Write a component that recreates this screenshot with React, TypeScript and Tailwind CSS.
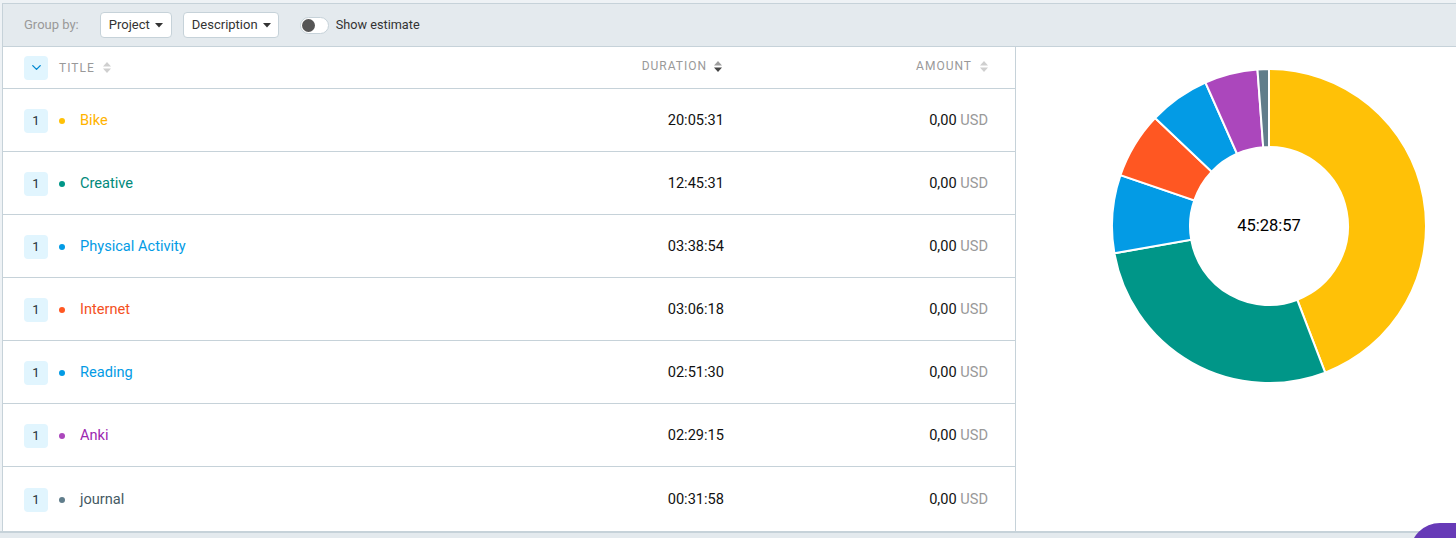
import { ChevronDown } from "lucide-react";

type Row = { name: string; color: string; label: string; duration: string; secs: number };

const rows: Row[] = [
  { name: "Bike", color: "#ffc107", label: "#ffb300", duration: "20:05:31", secs: 72331 },
  { name: "Creative", color: "#009688", label: "#00897b", duration: "12:45:31", secs: 45931 },
  { name: "Physical Activity", color: "#039be5", label: "#039be5", duration: "03:38:54", secs: 13134 },
  { name: "Internet", color: "#ff5722", label: "#f4511e", duration: "03:06:18", secs: 11178 },
  { name: "Reading", color: "#039be5", label: "#039be5", duration: "02:51:30", secs: 10290 },
  { name: "Anki", color: "#ab47bc", label: "#9c27b0", duration: "02:29:15", secs: 8955 },
  { name: "journal", color: "#607d8b", label: "#455a64", duration: "00:31:58", secs: 1918 },
];

function Caret() {
  return (
    <svg width="8" height="5" viewBox="0 0 8 5" className="shrink-0">
      <path d="M0 0h8L4 4.5z" fill="#333" />
    </svg>
  );
}

function SortIcon({ active = false }: { active?: boolean }) {
  return (
    <svg width="8" height="11" viewBox="0 0 8 11" className="shrink-0">
      <path d="M4 0l4 4.5H0z" fill={active ? "#9e9e9e" : "#cfcfcf"} />
      <path d="M4 11L0 6.5h8z" fill={active ? "#444" : "#cfcfcf"} />
    </svg>
  );
}

function arcPath(cx: number, cy: number, r: number, R: number, a0: number, a1: number) {
  const p = (rad: number, a: number) => [cx + rad * Math.sin(a), cy - rad * Math.cos(a)];
  const large = a1 - a0 > Math.PI ? 1 : 0;
  const [x0, y0] = p(R, a0);
  const [x1, y1] = p(R, a1);
  const [x2, y2] = p(r, a1);
  const [x3, y3] = p(r, a0);
  return `M${x0} ${y0}A${R} ${R} 0 ${large} 1 ${x1} ${y1}L${x2} ${y2}A${r} ${r} 0 ${large} 0 ${x3} ${y3}Z`;
}

function Donut() {
  const total = rows.reduce((s, r) => s + r.secs, 0);
  let acc = 0;
  return (
    <div className="relative h-[320px] w-[320px]">
      <svg width="320" height="320" viewBox="0 0 320 320">
        {rows.map((r) => {
          const a0 = (acc / total) * Math.PI * 2;
          acc += r.secs;
          const a1 = (acc / total) * Math.PI * 2;
          return (
            <path
              key={r.name}
              d={arcPath(160, 160, 79, 157, a0, a1)}
              fill={r.color}
              stroke="#fff"
              strokeWidth="2"
            />
          );
        })}
      </svg>
      <div className="absolute inset-0 flex items-center justify-center text-[16.5px] text-black">
        45:28:57
      </div>
    </div>
  );
}

export default function App() {
  return (
    <div
      className="relative flex h-[538px] w-full flex-col overflow-hidden bg-[#eef2f5] pt-[3px] text-[#333]"
      style={{ fontFamily: "Roboto, 'Liberation Sans', sans-serif" }}
    >
      <div className="ml-[2px] flex min-h-0 flex-1 flex-col border-l border-t border-[#c6d2d9]">
        {/* toolbar */}
        <div className="flex h-[43px] shrink-0 items-center border-b border-[#c6d2d9] bg-[#e4eaee] pl-[21px] text-[13px]">
          <span className="text-[#999]">Group by:</span>
          <button className="ml-[21px] flex h-[26px] w-[72px] items-center justify-between rounded-sm border border-[#c6d2d9] bg-white pl-2 pr-[8px] text-[#333]">
            Project
            <Caret />
          </button>
          <button className="ml-[11px] flex h-[26px] w-[96px] items-center justify-between rounded-sm border border-[#c6d2d9] bg-white pl-2 pr-[7px] text-[#333]">
            Description
            <Caret />
          </button>
          <div className="ml-[21px] flex h-[17px] w-[29px] items-center rounded-full border border-[#c6d2d9] bg-white px-[1px]">
            <div className="h-[13px] w-[13px] rounded-full bg-[#555]" />
          </div>
          <span className="ml-[7px] text-[12.7px] text-[#333]">Show estimate</span>
        </div>

        <div className="flex min-h-0 flex-1">
          {/* table */}
          <div className="flex w-[1013px] shrink-0 flex-col border-r border-[#c6d2d9] bg-white">
            <div className="flex h-[42px] shrink-0 items-center border-b border-[#c6d2d9] pl-[21px] pr-[27px] text-[12px] uppercase tracking-[1px] text-[#999]">
              <div className="flex flex-1 items-center">
                <div className="flex h-6 w-6 items-center justify-center rounded-sm bg-[#e1f5fe]">
                  <ChevronDown size={15} strokeWidth={2.2} color="#0288d1" />
                </div>
                <span className="ml-[11px]">Title</span>
                <span className="ml-[8px]">
                  <SortIcon />
                </span>
              </div>
              <div className="flex items-center justify-end gap-[7px] pb-[3px] pr-[2px]">
                Duration
                <SortIcon active />
              </div>
              <div className="flex w-[264px] items-center justify-end gap-[8px] pb-[3px]">
                Amount
                <SortIcon />
              </div>
            </div>
            {rows.map((r, i) => (
              <div
                key={r.name}
                className={
                  i === rows.length - 1
                    ? "flex min-h-0 flex-1 items-center pl-[21px] pr-[27px] pt-[1px] text-[14.6px]"
                    : "flex h-[63px] shrink-0 items-center border-b border-[#c6d2d9] pl-[21px] pr-[27px] pt-[1px] text-[14.6px]"
                }
              >
                <div className="flex flex-1 items-center">
                  <div className="flex h-6 w-6 items-center justify-center rounded-sm bg-[#e1f5fe] text-[13px] text-[#263238]">
                    1
                  </div>
                  <div className="ml-[11px] h-[6px] w-[6px] rounded-full" style={{ background: r.color }} />
                  <span className="ml-[15px]" style={{ color: r.label }}>
                    {r.name}
                  </span>
                </div>
                <div className="text-right text-[#111]">{r.duration}</div>
                <div className="w-[264px] text-right text-[#111]">
                  0,00 <span className="text-[#999]">USD</span>
                </div>
              </div>
            ))}
          </div>

          {/* chart */}
          <div className="flex-1 bg-white pl-[93px] pt-[19px]">
            <Donut />
          </div>
        </div>
      </div>
      <div className="h-[7px] shrink-0 border-t-2 border-[#c6d2d9] bg-[#e4eaee]" />

      <div className="absolute left-[1410px] top-[523px] h-[60px] w-[100px] rounded-[30px] bg-[#673ab7]" />
    </div>
  );
}
